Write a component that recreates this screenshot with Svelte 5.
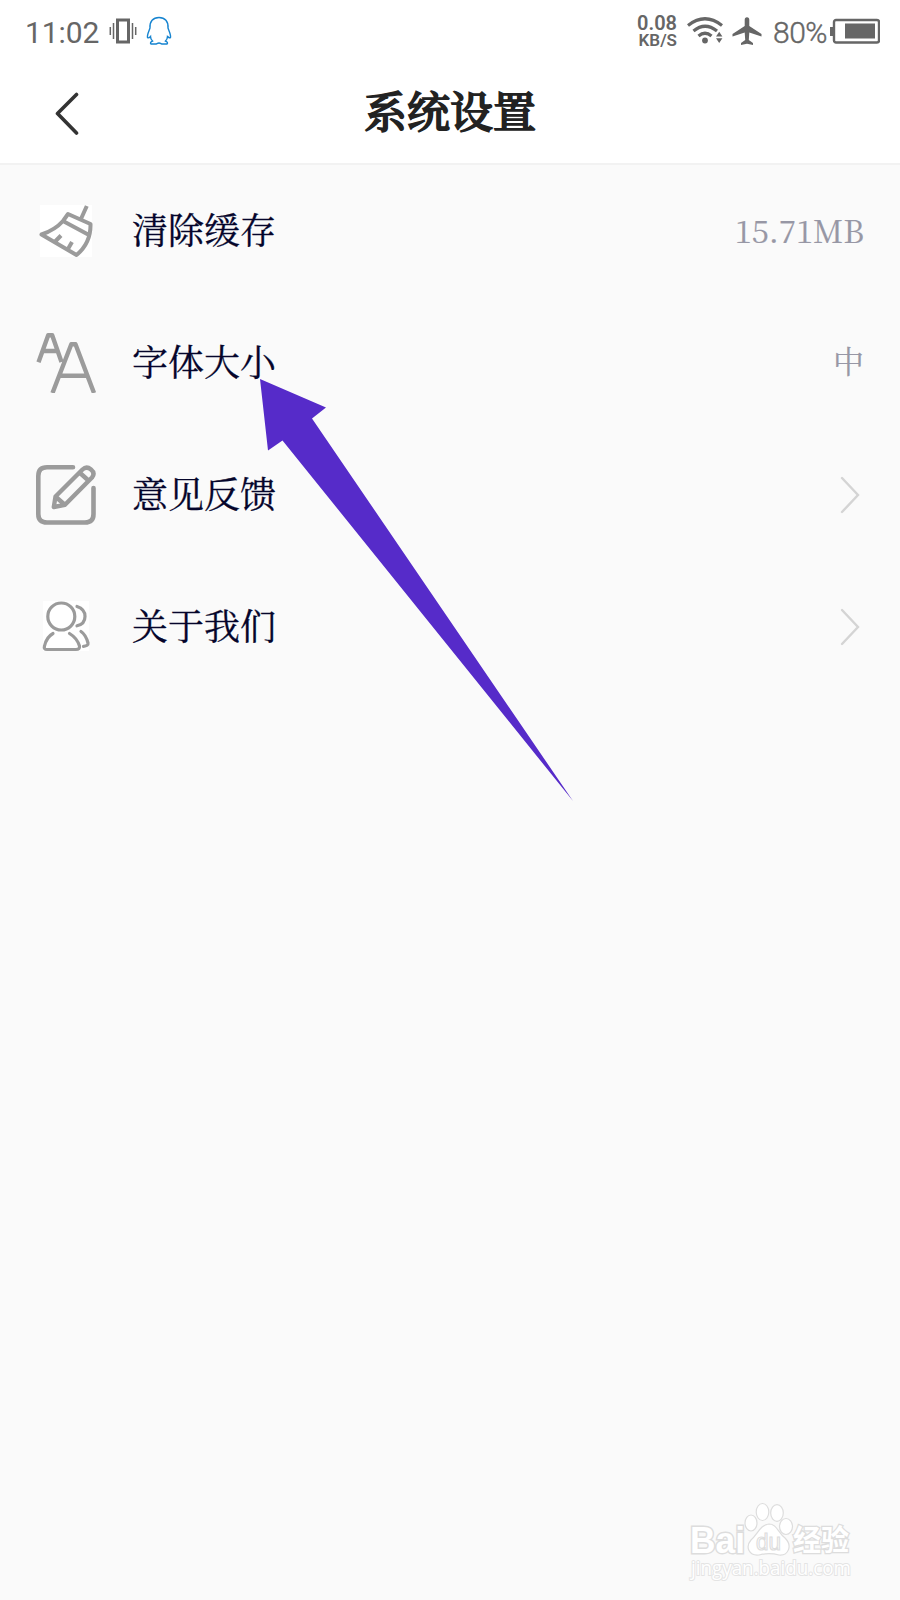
<script>
    const rows = [
        { icon: 'broom', label: '清除缓存', value: '15.71MB' },
        { icon: 'font', label: '字体大小', value: '中' },
        { icon: 'edit', label: '意见反馈' },
        { icon: 'people', label: '关于我们' }
    ];
</script>

<div class="screen">
    <div class="status">
        <span class="time">11:02</span>
        <svg class="vibrate" width="28" height="26" viewBox="0 0 28 26">
            <rect x="8.5" y="2" width="11" height="22" stroke-width="3" />
            <path d="M4.5 5v16M1.3 9v8M23.5 5v16M26.7 9v8" stroke-width="1.5" />
        </svg>
        <svg class="qq" width="26" height="30" viewBox="0 0 26 30">
            <path d="M4 12C3.500 5.500 7 1.500 13 1.500S22.500 5.500 22 12C23 15 25 18.500 24.500 21.500C23.500 22.500 22.500 21 21.500 20.500C21.500 23 20.500 24 19.500 25C21.500 26 22 27 21 28H16.500C15 28 15 27 13 27S11 28 9.500 28H5C4 27 4.500 26 6.500 25C5.500 24 4.500 22.500 4.500 20.500C3.500 21.500 2.500 22.500 1.500 21.500C1 18.500 3 15 4 12Z" />
        </svg>
        <div class="speed"><span>0.08</span><span>KB/S</span></div>
        <svg class="wifi" width="36" height="28" viewBox="0 0 36 28">
            <path d="M1 8.500Q18 -5 35 8.500M6.500 14Q18 4.500 30 14M11.500 19Q18 13.500 24.500 19" />
            <circle cx="18" cy="23.500" r="2.900" />
            <path class="solid" d="M29 19.500l3.200-4.800 3.200 4.800zM29 21.300h6.400l-3.200 4.800z" />
        </svg>
        <svg class="plane" width="30" height="28" viewBox="0 0 30 28">
            <path d="M12.700 9V3Q12.700.2 15 .2T17.300 3V9L29.500 17V19.500L17.300 15.500L16.800 23L21 26V28L15 26.800L9 28V26L13.200 23L12.700 15.500L.5 19.500V17Z" />
        </svg>
        <span class="percent">80%</span>
        <svg class="battery" width="50" height="26" viewBox="0 0 50 26">
            <rect x="4" y="2" width="45" height="22.500" rx="2" />
            <path d="M0 9h4v9H0zM15 5.500h30v15H15z" />
        </svg>
    </div>

    <header>
        <svg class="back" width="24" height="44" viewBox="0 0 24 44">
            <path d="M21.500 2.500L2.500 21.500L21.500 41" />
        </svg>
        <h1>系统设置</h1>
    </header>

    <ul>
        {#each rows as row}
            <li>
                <svg class="icon" width="60" height="60" viewBox="0 0 60 60">
                    {#if row.icon === 'broom'}
                        <rect class="tile" x="4" y="4" width="52" height="52" />
                        <path d="M50.800 5L44.500 19M27 20L32 13L54.500 23Q55 42 40.500 54L5.500 33.500Q19 29 27 20L53 34M25 34.500L18.700 41M36 41L31.700 48.500" />
                    {:else if row.icon === 'font'}
                        <path class="letters" d="M2.500 29.300L12.200 2.200H16.200L25.500 29M6.500 18H22M16.500 60L35.300 11.300H39.500L58 60M22.500 42.700H52" />
                    {:else if row.icon === 'edit'}
                        <path class="thick" d="M37 2.300H11Q2.300 2.300 2.300 11V49Q2.300 57.500 11 57.500H49Q57.500 57.500 57.500 49V23" />
                        <path class="pencil" d="M17.800 42L19.500 31.500L46.500 4.500Q50.500 .8 55 4.500T56 12.500L29 39.800L17.800 42ZM43.500 7.500L53 16M20 32L29 40" />
                    {:else}
                        <rect class="tile" x="7" y="4" width="46" height="50" />
                        <g class="thin">
                            <circle cx="25.300" cy="19.500" r="13.500" />
                            <path d="M41 9.500Q49 12 49 19.500T41 28.800M17 36.500Q10.500 40 8.500 49Q7.500 52.500 11 52.500H40Q44 52.500 43.500 49Q41 41 33.500 36.500M45 34.500Q50 38 52 46Q52.500 49 47.500 49.300" />
                        </g>
                    {/if}
                </svg>
                <span class="label">{row.label}</span>
                {#if row.value}
                    <span class="value" class:size={row.icon === 'font'}>{row.value}</span>
                {:else}
                    <svg class="more" width="20" height="38" viewBox="0 0 20 38">
                        <path d="M2 2L18 19L2 36" />
                    </svg>
                {/if}
            </li>
        {/each}
    </ul>

    <svg class="pointer" width="314" height="423" viewBox="0 0 314 423">
        <path d="M0 0L66 28.500L52 39.500L313 422L22.500 61.500L8 71.500Z" />
    </svg>

    <svg class="watermark" width="180" height="90" viewBox="0 0 180 90">
        <text class="brand" x="10" y="59" textLength="55" lengthAdjust="spacingAndGlyphs">Bai</text>
        <g class="paw">
            <ellipse cx="71" cy="29" rx="6" ry="8" />
            <ellipse cx="82.500" cy="18" rx="6.300" ry="8.500" />
            <ellipse cx="97" cy="19" rx="6.300" ry="8.300" />
            <ellipse cx="106" cy="32.500" rx="6.500" ry="8" />
            <path d="M89 30C97 30 98 39 105 44C113 52 108 62 99 61C92 59 86 59 79 61C69 62 65 53 71 46C78 40 80 31 89 30Z" />
        </g>
        <text class="du" x="76" y="56" textLength="25" lengthAdjust="spacingAndGlyphs">du</text>
        <text class="cn" x="113" y="57" textLength="56" lengthAdjust="spacingAndGlyphs">经验</text>
        <text class="site" x="11" y="81" textLength="160" lengthAdjust="spacingAndGlyphs">jingyan.baidu.com</text>
    </svg>
</div>

<style>
    :global(body) {
        background: #fafafa;
    }
    .screen {
        position: relative;
        width: 900px;
        height: 1600px;
        overflow: hidden;
        background: #fafafa;
        font-family: "Noto Serif CJK SC", "Liberation Serif", "Noto Sans CJK SC", serif;
    }
    svg {
        display: block;
        flex: none;
        fill: none;
    }
    .status {
        display: flex;
        align-items: center;
        height: 62px;
        padding: 0 20px 0 25px;
        box-sizing: border-box;
        background: #fff;
        color: #666;
        font-family: Roboto, sans-serif;
    }
    .time, .percent {
        font-size: 30px;
        line-height: 36px;
        margin-top: 4px;
    }
    .time {
        width: 84px;
        letter-spacing: -.1px;
    }
    .percent {
        width: 57px;
        font-weight: 300;
        letter-spacing: -.5px;
        -webkit-text-stroke: .4px #666;
    }
    .vibrate {
        stroke: #666;
    }
    .qq {
        margin-left: 9px;
        stroke: #1684d0;
        stroke-width: 1.4;
    }
    .speed {
        display: flex;
        flex-direction: column;
        align-items: flex-end;
        margin: 2px 0 0 auto;
        font-size: 17px;
        line-height: 17px;
        font-weight: 600;
    }
    .speed span:first-child {
        font-size: 20px;
    }
    .wifi {
        margin-left: 10px;
        stroke: #666;
        stroke-width: 3.2;
    }
    .wifi circle, .wifi .solid {
        fill: #666;
        stroke: none;
    }
    .plane {
        margin: 0 11px 0 9px;
        fill: #666;
    }
    .battery rect {
        stroke: #666;
        stroke-width: 2.4;
    }
    .battery path {
        fill: #666;
    }
    header {
        display: grid;
        grid-template-columns: 1fr auto 1fr;
        align-items: center;
        height: 103px;
        padding: 0 55px;
        box-sizing: border-box;
        background: #fff;
        border-bottom: 2px solid #f2f2f2;
    }
    .back {
        margin-top: 2px;
        stroke: #333;
        stroke-width: 3.6;
        stroke-linecap: round;
        stroke-linejoin: round;
    }
    h1 {
        margin: 0;
        padding-bottom: 6px;
        color: #222;
        font-size: 43px;
        line-height: 60px;
        font-weight: 500;
        -webkit-text-stroke: 1.6px #222;
    }
    ul {
        margin: 0;
        padding: 0;
        list-style: none;
    }
    li {
        display: flex;
        align-items: center;
        height: 132px;
        padding: 0 36px;
    }
    .icon {
        stroke: #9b9b9b;
        stroke-width: 4;
        stroke-linejoin: round;
    }
    .tile {
        fill: #fff;
        stroke: none;
    }
    .letters {
        stroke-width: 4.4;
    }
    .thick {
        stroke-width: 4.6;
        stroke-linecap: round;
    }
    .pencil {
        stroke-width: 4.4;
    }
    .thin {
        stroke-width: 3.2;
        stroke-linecap: round;
    }
    .label {
        margin-left: 36px;
        padding-bottom: 4px;
        color: #05052b;
        font-size: 36px;
        line-height: 48px;
        -webkit-text-stroke: .3px #05052b;
    }
    .value {
        margin-left: auto;
        padding-bottom: 3px;
        color: #9797a5;
        font-size: 31px;
        line-height: 44px;
        -webkit-text-stroke: .2px #9797a5;
    }
    .size {
        padding-bottom: 6px;
    }
    .more {
        margin: 0 4px 0 auto;
        stroke: #d4d4d4;
        stroke-width: 2.4;
        stroke-linecap: round;
    }
    .pointer {
        position: absolute;
        left: 260px;
        top: 379px;
        fill: #562bc9;
    }
    .watermark {
        position: absolute;
        left: 680px;
        top: 1494px;
        fill: #fff;
        stroke: #ddd;
        stroke-width: 1.2;
    }
    .watermark text {
        font-family: "Liberation Sans", "Noto Sans CJK SC", sans-serif;
    }
    .brand {
        font-size: 36px;
        font-weight: 700;
        paint-order: stroke;
        stroke-width: 3;
    }
    .du {
        font-size: 24px;
    }
    .cn {
        font-size: 29px;
        font-weight: 700;
        paint-order: stroke;
        stroke-width: 2.6;
    }
    .watermark .site {
        font-family: "Open Sans", sans-serif;
        font-size: 20px;
        paint-order: stroke;
        stroke: #e4e4e4;
        stroke-width: 2;
    }
</style>
